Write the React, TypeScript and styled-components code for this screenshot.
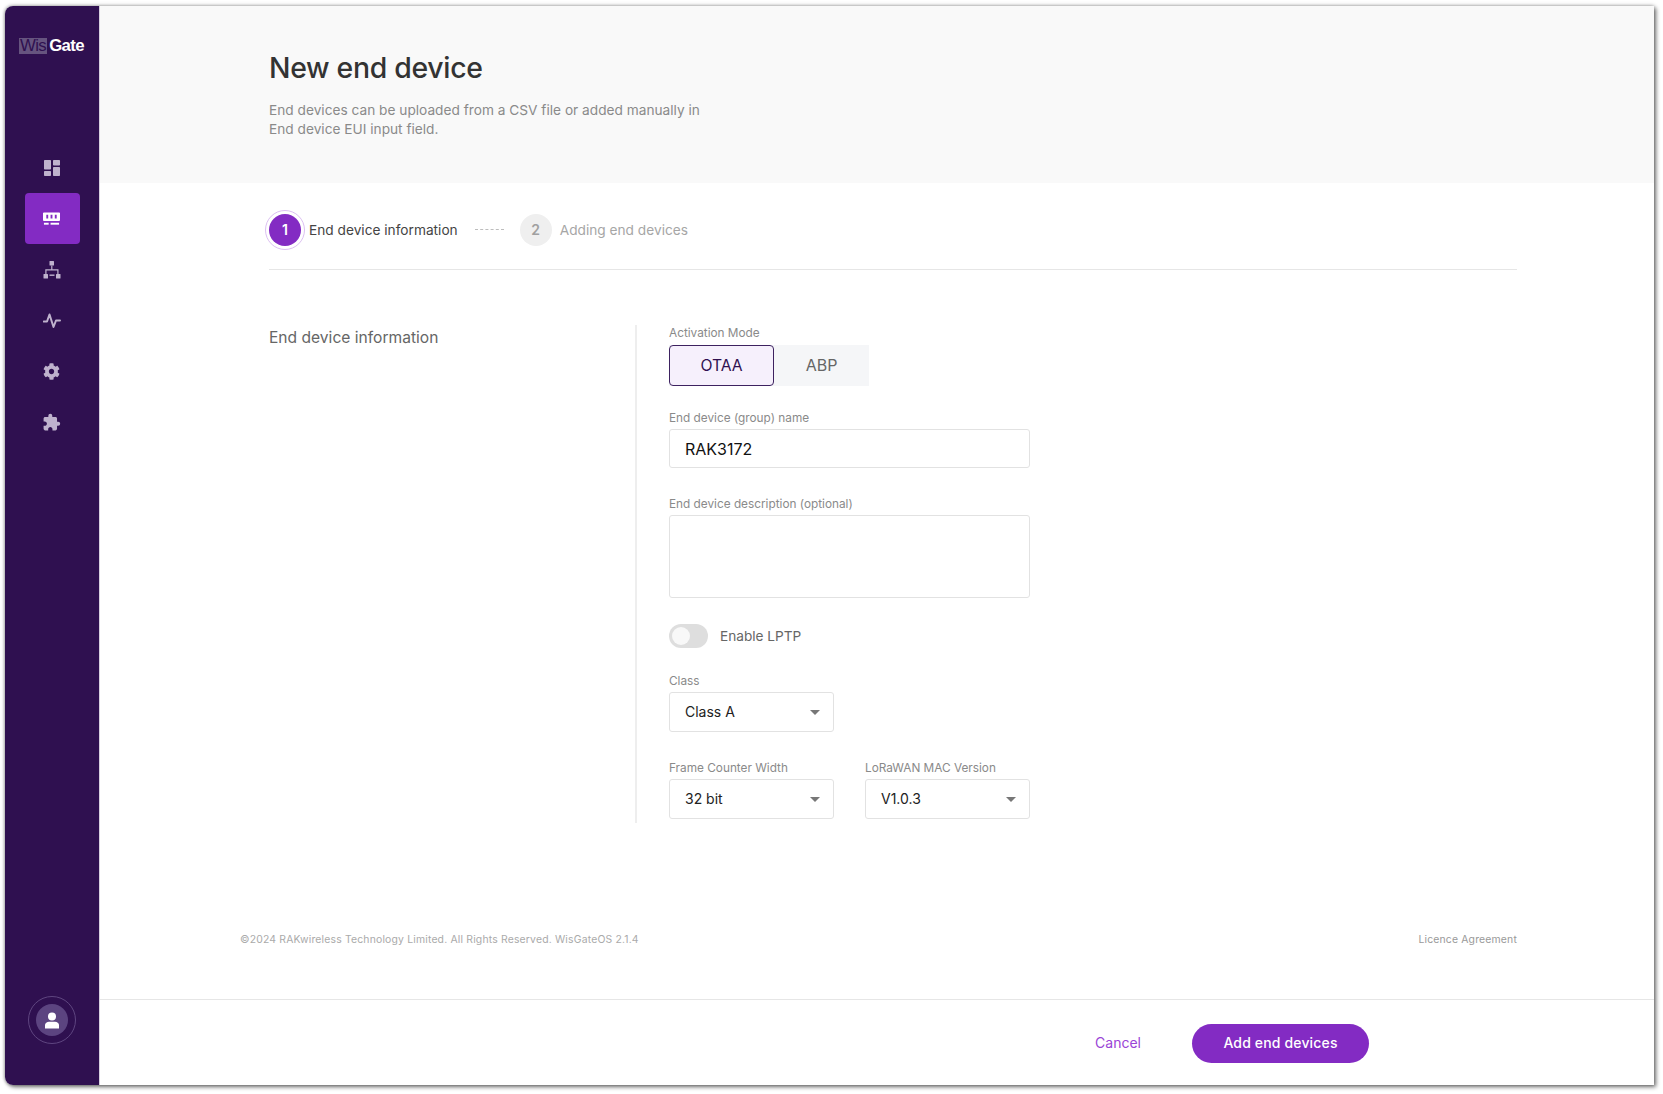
import React from 'react';
import styled, { createGlobalStyle } from 'styled-components';
import { FaCog } from 'react-icons/fa';
import { MdExtension } from 'react-icons/md';

const Global = createGlobalStyle`
  * { box-sizing: border-box; }
  html, body { margin: 0; padding: 0; background: #fff; }
  body { font-family: Inter, "Noto Sans", sans-serif; }
`;

const Frame = styled.div`
  width: 1663px;
  height: 1094px;
  padding: 6px 9px 9px 5px;
  overflow: hidden;
`;

const Window = styled.div`
  display: flex;
  height: 100%;
  border-radius: 8px 0 0 8px;
  overflow: hidden;
  background: #fff;
  box-shadow: 2px 2px 4px rgba(0, 0, 0, 0.55), 0 -1px 4px rgba(0, 0, 0, 0.15), -1px 0 3px rgba(0, 0, 0, 0.2);
`;

const Sidebar = styled.aside`
  width: 95px;
  flex: none;
  background: #2f1050;
  border-right: 1px solid #d8d0e0;
  display: flex;
  flex-direction: column;
  align-items: center;
  padding: 31px 0 41px 1px;
`;

const Logo = styled.div`
  display: flex;
  align-items: center;
  gap: 2px;
  height: 18px;
  margin: 0 2px 87px 0;
  font-size: 16.8px;
  letter-spacing: -0.6px;
  font-family: "Liberation Sans", sans-serif;
`;

const LogoBox = styled.span`
  background: #66547f;
  color: #2f1050;
  padding: 0 1px;
  height: 16px;
  line-height: 16px;
`;

const LogoText = styled.span`
  color: #fff;
  font-weight: 700;
`;

const Nav = styled.nav`
  display: flex;
  flex-direction: column;
  align-items: center;
`;

const NavItem = styled.div<{ $active?: boolean }>`
  width: 55px;
  height: 51px;
  padding-right: 2px;
  display: flex;
  align-items: center;
  justify-content: center;
  border-radius: 4px;
  color: ${(p) => (p.$active ? '#fff' : '#bfb2cd')};
  background: ${(p) => (p.$active ? '#832bc3' : 'transparent')};
`;

const Avatar = styled.div`
  margin: auto 2px 0 0;
  width: 48px;
  height: 48px;
  border-radius: 50%;
  border: 1px solid #5f4680;
  display: flex;
  align-items: center;
  justify-content: center;
`;

const AvatarInner = styled.div`
  width: 32px;
  height: 32px;
  border-radius: 50%;
  background: #5c4480;
  display: flex;
  align-items: center;
  justify-content: center;
  color: #fff;
`;

const Main = styled.main`
  flex: 1;
  min-width: 0;
  display: flex;
  flex-direction: column;
`;

const Header = styled.header`
  height: 177px;
  flex: none;
  background: #f9f9f9;
  padding: 44px 0 0 169px;
`;

const Title = styled.h1`
  margin: 0 0 15px;
  font-size: 28.4px;
  line-height: 36px;
  font-weight: 500;
  color: #333;
  letter-spacing: -0.3px;
`;

const Description = styled.p`
  margin: 0;
  width: 450px;
  font-size: 13.7px;
  line-height: 19px;
  color: #8a8a8a;
`;

const Content = styled.div`
  flex: 1;
  padding: 0 137px 0 169px;
  display: flex;
  flex-direction: column;
`;

const Stepper = styled.div`
  height: 87px;
  flex: none;
  display: flex;
  align-items: center;
  padding-top: 7px;
  border-bottom: 1px solid #e6e6e6;
`;

const StepCircle = styled.div<{ $active?: boolean }>`
  position: relative;
  width: 32px;
  height: 32px;
  flex: none;
  border-radius: 50%;
  display: flex;
  align-items: center;
  justify-content: center;
  font-size: 14px;
  font-weight: 600;
  color: ${(p) => (p.$active ? '#fff' : '#a0a0a0')};
  background: ${(p) => (p.$active ? '#832bc3' : '#efefef')};
  ${(p) =>
    p.$active &&
    `&::after {
      content: '';
      position: absolute;
      inset: -4px;
      border-radius: 50%;
      border: 1px solid #dcbff2;
    }`}
`;

const StepLabel = styled.span<{ $active?: boolean }>`
  margin-left: 8px;
  font-size: 13.7px;
  color: ${(p) => (p.$active ? '#444' : '#a6a6a6')};
`;

const StepDots = styled.div`
  width: 29px;
  margin: 0 16px 0 17px;
  border-top: 1px dashed #bdbdbd;
`;

const Section = styled.section`
  display: flex;
  margin-top: 55px;
`;

const SectionTitle = styled.h2`
  width: 366px;
  flex: none;
  margin: 3px 0 0;
  font-size: 15.6px;
  line-height: 19px;
  font-weight: 400;
  color: #666;
`;

const Form = styled.div`
  border-left: 2px solid #eee;
  padding: 0 0 4px 32px;
  height: 498px;
  width: 395px;
`;

const Label = styled.label`
  display: block;
  padding-top: 1px;
  font-size: 11.8px;
  line-height: 15px;
  color: #8a8a8a;
`;

const Field = styled.div<{ $gap: number }>`
  margin-bottom: ${(p) => p.$gap}px;
`;

const ModeSwitch = styled.div`
  display: flex;
  margin-top: 4px;
  height: 41px;
  width: 200px;
  background: #f5f6f8;
`;

const ModeButton = styled.div<{ $active?: boolean }>`
  display: flex;
  align-items: center;
  justify-content: center;
  padding-bottom: 1px;
  font-size: ${(p) => (p.$active ? '15.7px' : '16px')};
  width: ${(p) => (p.$active ? '105px' : '95px')};
  color: ${(p) => (p.$active ? '#2f1050' : '#666')};
  background: ${(p) => (p.$active ? '#f6f0fc' : 'transparent')};
  border: ${(p) => (p.$active ? '1px solid #3d2260' : 'none')};
  border-radius: ${(p) => (p.$active ? '4px' : '0')};
`;

const Input = styled.div`
  margin-top: 3px;
  height: 39px;
  padding: 0 15px;
  display: flex;
  align-items: center;
  font-size: 16px;
  color: #111;
  border: 1px solid #e2e2e2;
  border-radius: 3px;
`;

const TextArea = styled.div`
  margin-top: 3px;
  height: 83px;
  border: 1px solid #e2e2e2;
  border-radius: 3px;
`;

const ToggleRow = styled.div`
  display: flex;
  align-items: center;
  gap: 12px;
  font-size: 13.65px;
  color: #666;
  margin-bottom: 25px;
`;

const Toggle = styled.div`
  position: relative;
  width: 39px;
  height: 24px;
  border-radius: 12px;
  background: #dedede;

  &::after {
    content: '';
    position: absolute;
    left: 3px;
    top: 3px;
    width: 18px;
    height: 18px;
    border-radius: 50%;
    background: #f8f8f8;
  }
`;

const SelectRow = styled.div`
  display: flex;
  gap: 31px;
`;

const Select = styled.div`
  width: 165px;
  margin-top: 3px;
  height: 40px;
  padding: 0 13px 2px 15px;
  display: flex;
  align-items: center;
  justify-content: space-between;
  font-size: 14px;
  color: #222;
  border: 1px solid #e2e2e2;
  border-radius: 3px;
`;

const Caret = styled.span`
  width: 0;
  height: 0;
  margin-top: 3px;
  border-left: 5px solid transparent;
  border-right: 5px solid transparent;
  border-top: 5px solid #777;
`;

const Legal = styled.div`
  margin: auto 0 52px -29px;
  display: flex;
  justify-content: space-between;
  font-size: 10.4px;
  line-height: 14px;
  letter-spacing: 0.18px;
  color: #aaa;
`;

const LegalLink = styled.span`
  color: #999;
`;

const ActionBar = styled.footer`
  height: 86px;
  flex: none;
  border-top: 1px solid #e6e6e6;
  display: flex;
  align-items: center;
  justify-content: flex-end;
  padding: 1px 285px 0 0;
  gap: 51px;
`;

const CancelLink = styled.span`
  margin-bottom: 2px;
  font-size: 14px;
  color: #9a45d6;
`;

const PrimaryButton = styled.div`
  width: 177px;
  height: 39px;
  padding-bottom: 2px;
  border-radius: 20px;
  background: #832bc3;
  color: #fff;
  font-size: 14px;
  font-weight: 500;
  letter-spacing: 0.15px;
  display: flex;
  align-items: center;
  justify-content: center;
`;

const DashboardIcon = () => (
  <svg width="18" height="18" viewBox="0 0 18 18" fill="currentColor">
    <rect x="1" y="1" width="7" height="9.5" rx="0.8" />
    <rect x="10" y="1" width="7" height="5.5" rx="0.8" />
    <rect x="1" y="12" width="7" height="5" rx="0.8" />
    <rect x="10" y="8" width="7" height="9" rx="0.8" />
  </svg>
);

const DevicesIcon = () => (
  <svg width="17" height="14" viewBox="0 0 18 14" fill="currentColor">
    <path fillRule="evenodd" d="M1 0h16a1 1 0 0 1 1 1v7a1 1 0 0 1-1 1H1a1 1 0 0 1-1-1V1a1 1 0 0 1 1-1zm2.500 2.500v4h2v-4zm4.500 0v4h2v-4zm4.500 0v4h2v-4z" />
    <rect x="1" y="11" width="5" height="2" />
    <rect x="8" y="11" width="9" height="2" />
  </svg>
);

const NetworkIcon = () => (
  <svg width="18" height="18" viewBox="0 0 18 18" fill="currentColor">
    <rect x="6.500" y="0" width="4.500" height="4.500" rx="0.5" />
    <rect x="0.5" y="13" width="4.500" height="4.500" rx="0.5" />
    <rect x="13" y="13" width="4.500" height="4.500" rx="0.5" />
    <path d="M8.200 4.500h1.200v3.700h6.100V13h-1.200V9.400H3.500V13H2.300V8.200h5.900z" />
    <rect x="6.500" y="13.500" width="5" height="1.400" />
  </svg>
);

const PulseIcon = () => (
  <svg width="18" height="16" viewBox="0 0 18 16" fill="none" stroke="currentColor" strokeWidth="2" strokeLinejoin="round" strokeLinecap="round">
    <path d="M0.800 8.500H4L6.500 1.500L10.500 14L13 7.500H17" />
  </svg>
);

const PersonIcon = () => (
  <svg width="16" height="17" viewBox="0 0 16 17" fill="currentColor">
    <circle cx="8" cy="4.500" r="4" />
    <path d="M1 16.500V13c0-2 2-3 4-3.300h6c2 .3 4 1.300 4 3.300v3.500z" />
  </svg>
);

export default function App() {
  return (
    <Frame>
      <Global />
      <Window>
        <Sidebar>
          <Logo>
            <LogoBox>Wis</LogoBox>
            <LogoText>Gate</LogoText>
          </Logo>
          <Nav>
            <NavItem><DashboardIcon /></NavItem>
            <NavItem $active><DevicesIcon /></NavItem>
            <NavItem><NetworkIcon /></NavItem>
            <NavItem><PulseIcon /></NavItem>
            <NavItem><FaCog size={17} /></NavItem>
            <NavItem><MdExtension size={19} /></NavItem>
          </Nav>
          <Avatar>
            <AvatarInner><PersonIcon /></AvatarInner>
          </Avatar>
        </Sidebar>
        <Main>
          <Header>
            <Title>New end device</Title>
            <Description>
              End devices can be uploaded from a CSV file or added manually in End device EUI input field.
            </Description>
          </Header>
          <Content>
            <Stepper>
              <StepCircle $active>1</StepCircle>
              <StepLabel $active>End device information</StepLabel>
              <StepDots />
              <StepCircle>2</StepCircle>
              <StepLabel>Adding end devices</StepLabel>
            </Stepper>
            <Section>
              <SectionTitle>End device information</SectionTitle>
              <Form>
                <Field $gap={24}>
                  <Label>Activation Mode</Label>
                  <ModeSwitch>
                    <ModeButton $active>OTAA</ModeButton>
                    <ModeButton>ABP</ModeButton>
                  </ModeSwitch>
                </Field>
                <Field $gap={28}>
                  <Label>End device (group) name</Label>
                  <Input>RAK3172</Input>
                </Field>
                <Field $gap={26}>
                  <Label>End device description (optional)</Label>
                  <TextArea />
                </Field>
                <ToggleRow>
                  <Toggle />
                  Enable LPTP
                </ToggleRow>
                <Field $gap={28}>
                  <Label>Class</Label>
                  <Select>Class A<Caret /></Select>
                </Field>
                <SelectRow>
                  <div>
                    <Label>Frame Counter Width</Label>
                    <Select>32 bit<Caret /></Select>
                  </div>
                  <div>
                    <Label>LoRaWAN MAC Version</Label>
                    <Select>V1.0.3<Caret /></Select>
                  </div>
                </SelectRow>
              </Form>
            </Section>
            <Legal>
              <span>©2024 RAKwireless Technology Limited. All Rights Reserved. WisGateOS 2.1.4</span>
              <LegalLink>Licence Agreement</LegalLink>
            </Legal>
          </Content>
          <ActionBar>
            <CancelLink>Cancel</CancelLink>
            <PrimaryButton>Add end devices</PrimaryButton>
          </ActionBar>
        </Main>
      </Window>
    </Frame>
  );
}
